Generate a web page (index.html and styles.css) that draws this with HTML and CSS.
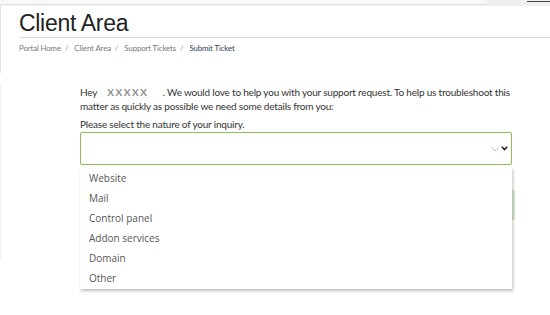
FILE: index.html
```html
<!DOCTYPE html>
<html lang="en">

<head>
	<meta charset="UTF-8" />
	<meta name="viewport" content="width=device-width, initial-scale=1.0" />
	<title>Client Area - Submit Ticket</title>
	<link rel="stylesheet" href="styles.css">
</head>

<body>
	<div class="topbar">
		<div class="topbar-tab"></div>
		<div class="topbar-line"></div>
	</div>

	<div class="header">
		<h1>Client Area</h1>
		<div class="breadcrumb">
			<a href="#">Portal Home</a><span class="sep">/</span>
			<a href="#">Client Area</a><span class="sep">/</span>
			<a href="#">Support Tickets</a><span class="sep">/</span>
			<span class="current">Submit Ticket</span>
		</div>
	</div>

	<div class="panel">
		<div class="ticket-form">
			<p class="intro">Hey <b class="user-name">XXXXX</b> . We would love to help you with your support request. To help us troubleshoot this matter as quickly as possible we need some details from you:</p>
			<label class="field-label">Please select the nature of your inquiry.</label>
			<div class="select-wrap">
				<div class="select-box">
					<svg class="arrow-light" width="8" height="5" viewBox="0 0 8 5"><path d="M0.5 0.5 L4 4 L7.5 0.5" fill="none" stroke="#b5b5b5" stroke-width="0.8"/></svg>
					<svg class="arrow-dark" width="7" height="5" viewBox="0 0 7 5"><path d="M0.8 0.8 L3.5 3.6 L6.2 0.8" fill="none" stroke="#222" stroke-width="1.6"/></svg>
				</div>
				<ul class="select-menu">
					<li>Website</li>
					<li>Mail</li>
					<li>Control panel</li>
					<li>Addon services</li>
					<li>Domain</li>
					<li>Other</li>
				</ul>
			</div>
			<div class="form-actions">
				<button class="btn-next">Next</button>
			</div>
		</div>
	</div>
</body>

</html>
```

FILE: styles.css
```css
body, html {
	margin: 0;
	min-height: 100vh;
	background-color: white;
	font-family: 'Open Sans', sans-serif;
}
.topbar {
	display: flex;
	align-items: flex-start;
	height: 6px;
	background-color: #efefef;
}
.topbar-tab {
	width: 487px;
	height: 4px;
	background-color: #f8f8f8;
	border-bottom: 1px solid #e3e3e3;
}
.topbar-line {
	width: 23px;
	height: 1px;
	margin: 1px 0 0 40px;
	background-color: #444;
}
.header {
	height: 67px;
	padding-left: 18px;
	border-left: 1px solid #e4e4e4;
}
.header h1 {
	margin: 0;
	padding: 4px 0 1px 0;
	font-family: 'Liberation Sans', Arial, sans-serif;
	font-weight: normal;
	font-size: 23px;
	line-height: 26px;
	letter-spacing: -0.3px;
	color: #222;
	border-bottom: 1px solid #dcdcdc;
}
.breadcrumb {
	margin-top: 4px;
	font-family: 'Lato', sans-serif;
	font-size: 7.8px;
	line-height: 12px;
	letter-spacing: -0.1px;
	color: #777;
}
.breadcrumb a {
	color: #777;
	text-decoration: none;
}
.breadcrumb .sep {
	margin: 0 4px;
	color: #999;
}
.breadcrumb .current {
	color: #2e4057;
}
.panel {
	margin-top: 12px;
	height: 175px;
	border-left: 1px solid #f0f0f0;
}
.ticket-form {
	width: 432px;
	margin-left: 79px;
	font-family: 'Lato', sans-serif;
	font-size: 10px;
	letter-spacing: -0.2px;
	color: #333;
}
.intro {
	margin: 0;
	line-height: 14px;
}
.user-name {
	margin: 0 12px 0 8px;
	color: #8a8a8a;
	letter-spacing: 1.5px;
}
.field-label {
	display: block;
	margin-top: 4px;
	line-height: 14px;
}
.select-wrap {
	position: relative;
	margin-top: 1px;
}
.select-box {
	height: 31px;
	border: 1px solid #8cc152;
	border-radius: 2px;
	display: flex;
	align-items: center;
	justify-content: flex-end;
	gap: 2px;
	padding-right: 3px;
}
.arrow-light {
	margin-top: 1px;
}
.select-menu {
	position: absolute;
	top: 35px;
	left: 0;
	width: 432px;
	margin: 0;
	padding: 1px 0 1px 0;
	list-style: none;
	background-color: white;
	box-shadow: 1px 2px 3px rgba(0, 0, 0, 0.25);
	z-index: 10;
	letter-spacing: 0;
}
.select-menu li {
	height: 20px;
	line-height: 20px;
	padding-left: 9px;
	font-family: 'Open Sans', sans-serif;
	font-size: 10px;
	color: #555;
}
.form-actions {
	display: flex;
	justify-content: flex-end;
	margin-top: 25px;
}
.btn-next {
	width: 80px;
	height: 30px;
	margin-right: -3px;
	border: none;
	border-radius: 2px;
	background-color: #d9ead0;
}
```
